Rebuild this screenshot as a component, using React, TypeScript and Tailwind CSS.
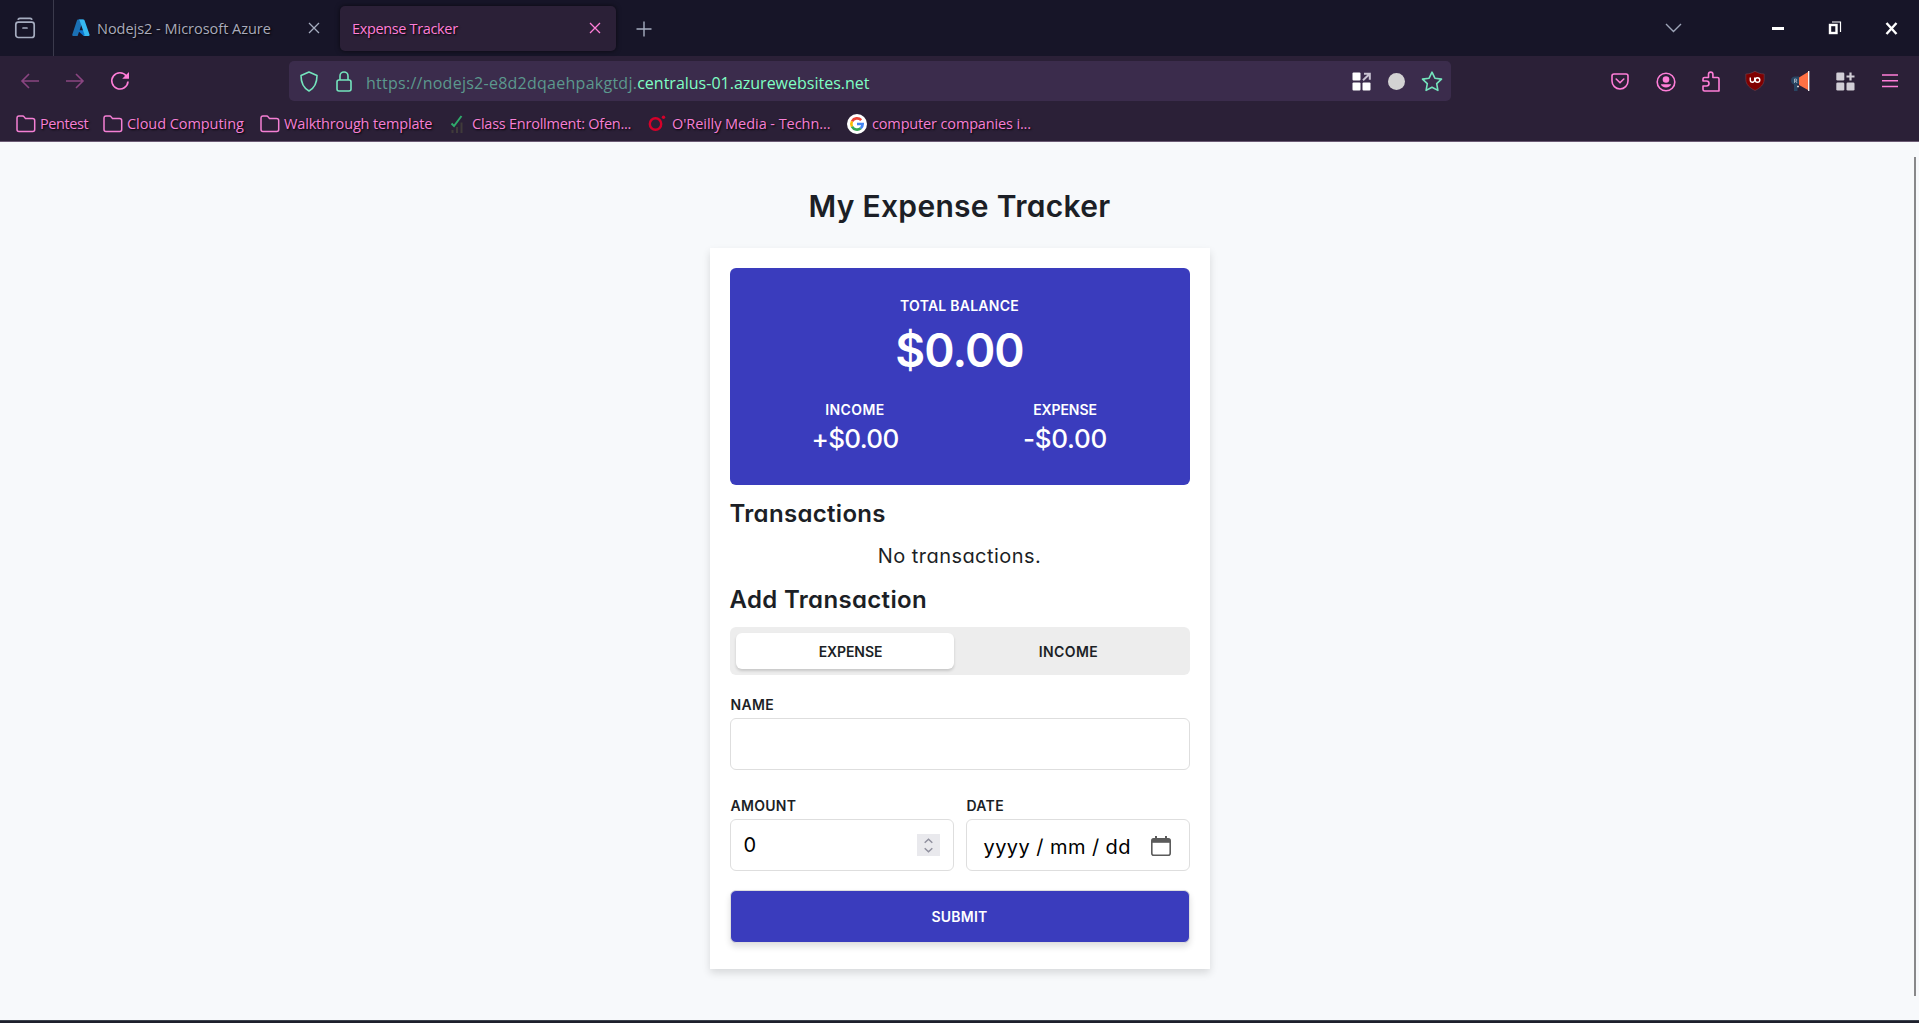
import React from "react";

const ui = "font-['Open_Sans','Noto_Sans',sans-serif]";

function Folder({ label, width, tracking }: { label: string; width: string; tracking: string }) {
  return (
    <div className={`flex items-center gap-1 ${width}`}>
      <svg width="20" height="18" viewBox="0 0 20 18" fill="none" stroke="#f57fd4" strokeWidth="1.5">
        <path d="M1 3.2C1 1.8 1.8 1 3 1h3.6c.8 0 1.2.3 1.6.9L9.500 3.600H16.500c1.500 0 2.200.8 2.200 2V14.500c0 1.300-.8 2-2 2H3c-1.200 0-2-.7-2-2z" />
      </svg>
      <span className={tracking}>{label}</span>
    </div>
  );
}

function Cross({ color }: { color: string }) {
  return (
    <svg className="-mt-px" width="12" height="12" viewBox="0 0 12 12" stroke={color} strokeWidth="1.300" fill="none">
      <path d="M1 1l10 10M11 1L1 11" />
    </svg>
  );
}

function TabStrip() {
  return (
    <div className="flex h-14 items-center bg-[#171528]">
      <div className="flex h-full w-[54px] items-center border-r border-[#3b3a4c] pl-[14px]">
        <svg width="22" height="22" viewBox="0 0 22 22" fill="none" stroke="#a6adc0" strokeWidth="1.700" strokeLinecap="round">
          <path d="M4.200 2.200C4.700 1.600 5 1.400 6 1.400h10c1 0 1.300.2 1.800.8" />
          <rect x="1.800" y="5.200" width="18.400" height="15.300" rx="2.500" />
          <path d="M9 11h4" />
        </svg>
      </div>
      <div className="flex h-full w-[286px] items-center pl-[18px]">
        <svg width="18" height="18" viewBox="0 0 18 18">
          <path d="M6 .5h5.300L5.600 17H1.200C.4 17 0 16.400.3 15.600L5 1.300C5.200.8 5.500.5 6 .5z" fill="#1b70b4" />
          <path d="M14 11.300H5.500l6.200 5.700H16z" fill="#0e76d0" />
          <path d="M6.500.5h5c.5 0 .8.3 1 .8l5 14.300c.3.800-.1 1.400-.9 1.400h-5c.8 0 1.200-.6.900-1.400L7.500 1.300C7.300.8 7 .5 6.500.5z" fill="#36b9f0" />
        </svg>
        <span className="ml-[7px] w-[211px] whitespace-nowrap pt-px text-[14.500px] tracking-[-0.020px] text-[#a9aabb] [text-shadow:1px_1px_2px_#000]">Nodejs2 - Microsoft Azure</span>
        <Cross color="#a6adc0" />
      </div>
      <div className="flex h-[45px] w-[276px] items-center rounded-[5px] bg-[#2b2037] pl-3 shadow-[0_0_5px_rgba(0,0,0,0.6)]">
        <span className="w-[237px] whitespace-nowrap pt-px text-[14.500px] tracking-[-0.350px] text-[#ff7ed8] [text-shadow:1px_1px_2px_#000]">Expense Tracker</span>
        <Cross color="#ff7ed8" />
      </div>
      <svg className="ml-5 mt-px" width="16" height="16" viewBox="0 0 16 16" stroke="#a6adc0" strokeWidth="1.400">
        <path d="M8 .5v15M.5 8h15" />
      </svg>
      <div className="ml-auto flex items-center pr-[21px]">
        <svg width="17" height="10" viewBox="0 0 17 10" stroke="#9ea5b8" strokeWidth="1.400" fill="none">
          <path d="M1 1l7.500 7.500L16 1" />
        </svg>
        <div className="ml-[90px] h-[3px] w-3 bg-white" />
        <svg className="ml-[44px]" width="14" height="14" viewBox="0 0 14 14" fill="none" stroke="#fff">
          <rect x="2" y="4" width="6.500" height="8" strokeWidth="2.400" />
          <path d="M4 1h8.500v10" strokeWidth="1.200" />
        </svg>
        <svg className="ml-[43px]" width="13" height="13" viewBox="0 0 13 13" stroke="#fff" strokeWidth="2.400">
          <path d="M1.500 1l10 11M11.500 1l-10 11" />
        </svg>
      </div>
    </div>
  );
}

function NavBar() {
  return (
    <div className="flex h-[50px] items-center">
      <div className="flex w-[289px] items-center pl-5">
        <svg width="20" height="16" viewBox="0 0 20 16" fill="none" stroke="#8a4581" strokeWidth="1.600">
          <path d="M19 8H2M9 1L2 8l7 7" />
        </svg>
        <svg className="ml-[25px]" width="20" height="16" viewBox="0 0 20 16" fill="none" stroke="#8a4581" strokeWidth="1.600">
          <path d="M1 8h17M11 1l7 7-7 7" />
        </svg>
        <svg className="ml-[25px]" width="20" height="20" viewBox="0 0 20 20" fill="none" stroke="#ff7ed8" strokeWidth="1.700">
          <path d="M16.400 5A8.100 8.100 0 1 0 18 10.500" />
          <path d="M19 1v6.800h-6.800z" fill="#ff7ed8" stroke="none" />
        </svg>
      </div>
      <div className="flex h-10 w-[1162px] items-center rounded-[5px] bg-[#3b2c4c] pl-[11px] pr-2">
        <svg width="18" height="21" viewBox="0 0 18 21" fill="none" stroke="#74e5bd" strokeWidth="1.600">
          <path d="M9 1l8 3.500c0 7-2.500 12.500-8 15.500C3.500 17 1 11.500 1 4.500z" strokeLinejoin="round" />
        </svg>
        <svg className="ml-[18px]" width="16" height="21" viewBox="0 0 16 21" fill="none" stroke="#74e5bd" strokeWidth="1.600">
          <rect x="1" y="9" width="14" height="11" rx="2" />
          <path d="M4 9V5a4 4 0 0 1 8 0v4" />
        </svg>
        <span className="ml-[14px] whitespace-nowrap pt-[3px] text-[16px] tracking-[0.260px] text-[#5c988e]">
          https://nodejs2-e8d2dqaehpakgtdj.<span className="tracking-normal text-[#80ffc4]">centralus-01.azurewebsites.net</span>
        </span>
        <div className="ml-auto flex items-center">
          <svg width="19" height="19" viewBox="0 0 19 19" fill="#fff">
            <rect x=".5" y=".5" width="8" height="8" rx="1" />
            <rect x=".5" y="10.500" width="8" height="8" rx="1" />
            <rect x="10.500" y="10.500" width="8" height="8" rx="1" />
            <path d="M12 1.800h5.800v6M17.300 2.300l-6.300 6" fill="none" stroke="#c9c3d1" strokeWidth="2" />
          </svg>
          <div className="ml-[17px] size-[17px] rounded-full bg-[#d3d3d3]" />
          <svg className="ml-4" width="22" height="21" viewBox="0 0 22 21" fill="none" stroke="#74e5bd" strokeWidth="1.600" strokeLinejoin="round">
            <path d="M11 1.200l2.900 6 6.600.9-4.800 4.600 1.200 6.700L11 16.200l-5.900 3.200 1.200-6.700L1.500 8.100l6.600-.9z" />
          </svg>
        </div>
      </div>
      <div className="ml-auto flex items-center pr-[21px]">
        <svg width="18" height="17" viewBox="0 0 18 17" fill="none" stroke="#ff7ed8" strokeWidth="1.600" strokeLinecap="round">
          <path d="M3 1h12c1.300 0 2 .7 2 2v5a8 8 0 0 1-16 0V3c0-1.300.7-2 2-2z" />
          <path d="M5.200 6L9 9.700 12.800 6" />
        </svg>
        <svg className="ml-[27px] mt-px" width="20" height="20" viewBox="0 0 20 20" fill="#ff7ed8">
          <circle cx="10" cy="10" r="8.800" fill="none" stroke="#ff7ed8" strokeWidth="1.600" />
          <circle cx="10" cy="7.500" r="3.300" />
          <path d="M4.800 12.200h10.400c-.5 1.900-2.600 3.300-5.200 3.300s-4.700-1.400-5.200-3.300z" />
        </svg>
        <svg className="ml-[26px]" width="18" height="21" viewBox="0 0 18 21" fill="none" stroke="#ff7ed8" strokeWidth="1.600" strokeLinejoin="round">
          <path d="M1 10V8C1 7 1.500 6.500 2.500 6.500H6.500V3.300a2.200 2.200 0 0 1 4.400 0V6.500h4.600c1 0 1.500.5 1.500 1.500V20H2.500C1.500 20 1 19.500 1 18.500V15h3.500a2.400 2.400 0 0 0 0-5z" />
        </svg>
        <svg className="ml-[25px]" width="20" height="20" viewBox="0 0 20 20">
          <path d="M10 .3C7 2 4 3 .8 3v5.500c0 5 4 8.500 9.200 11 5.200-2.500 9.200-6 9.200-11V3C16 3 13 2 10 .3z" fill="#800000" stroke="#6d4452" strokeWidth=".6" />
          <path d="M5.300 6.500V9a2.200 2.200 0 0 0 4.400 0V6.500" fill="none" stroke="#fff" strokeWidth="1.400" />
          <circle cx="12.500" cy="9" r="2.300" fill="none" stroke="#fff" strokeWidth="1.400" />
        </svg>
        <svg className="ml-[25px]" width="20" height="20" viewBox="0 0 20 20">
          <path d="M1 9.500c0-3 2-4 4-4h4v7.500H7.500V20H4v-6.500C2 13 1 11.500 1 9.500z" fill="#294563" />
          <path d="M9 6.500l9-5.500v18l-9-5z" fill="#ff7043" />
          <path d="M18.700 0v20" stroke="#fff" strokeWidth="1.300" />
          <path d="M7.200 15.500h1.600" stroke="#fff" strokeWidth="1.600" />
          <path d="M4.500 12V8h1.300a1 1 0 0 1 0 2H4.500m1.300 0L7 12" fill="none" stroke="#cbd5df" strokeWidth=".7" />
        </svg>
        <svg className="ml-[26px]" width="19" height="19" viewBox="0 0 19 19" fill="#d1ced6">
          <rect x=".3" y=".5" width="8" height="8" rx="1.300" />
          <rect x=".3" y="10.500" width="8" height="8" rx="1.300" />
          <rect x="10.500" y="10.500" width="8" height="8" rx="1.300" />
          <path d="M14.500.5v8M10.500 4.500h8" stroke="#d1ced6" strokeWidth="2.200" />
        </svg>
        <svg className="-mt-px ml-[27px]" width="16" height="14" viewBox="0 0 16 14" stroke="#ff7ed8" strokeWidth="1.500">
          <path d="M0 1h16M0 6.700h16M0 12.400h16" />
        </svg>
      </div>
    </div>
  );
}

function Bookmarks() {
  return (
    <div className="flex h-[35px] items-center whitespace-nowrap pl-4 pt-px text-[14.500px] text-[#f57fd4] [text-shadow:1px_1px_2px_#000]">
      <Folder label="Pentest" width="w-[87px]" tracking="tracking-[-0.400px]" />
      <Folder label="Cloud Computing" width="w-[157px]" tracking="tracking-[-0.060px]" />
      <Folder label="Walkthrough template" width="w-[190px]" tracking="tracking-[-0.160px]" />
      <div className="flex w-[198px] items-center">
        <svg width="14" height="19" viewBox="0 0 14 19" fill="none">
          <path d="M1.500 8.500l2.500 2.500L11.500 1" stroke="#2fa96b" strokeWidth="2" />
          <path d="M2.500 18v-3M7 18v-6M11.500 18V7.500" stroke="#403b3a" strokeWidth="2" />
        </svg>
        <span className="ml-2 tracking-[-0.240px]">Class Enrollment: Ofen...</span>
      </div>
      <div className="flex w-[199px] items-center">
        <svg className="-mt-[3px]" width="18" height="16" viewBox="0 0 18 16">
          <ellipse cx="7.500" cy="9" rx="5.700" ry="5.700" fill="none" stroke="#d6002a" strokeWidth="2.400" />
          <circle cx="15.500" cy="2.200" r="1.700" fill="#d6002a" />
        </svg>
        <span className="ml-[6px] tracking-[-0.050px]">O'Reilly Media - Techn...</span>
      </div>
      <div className="flex items-center">
        <svg className="-mt-px" width="20" height="20" viewBox="0 0 20 20">
          <circle cx="10" cy="10" r="10" fill="#fff" />
          <g fill="none" strokeWidth="2.600">
            <path d="M14.200 6.200A5.700 5.700 0 0 0 5 7.300" stroke="#ea4335" />
            <path d="M5 7.300a5.700 5.700 0 0 0 0 5.400" stroke="#fbbc05" />
            <path d="M5 12.700a5.700 5.700 0 0 0 8.700 1.600" stroke="#34a853" />
            <path d="M13.700 14.300A5.700 5.700 0 0 0 15.700 10H10" stroke="#4285f4" />
          </g>
        </svg>
        <span className="ml-[5px] tracking-[-0.150px]">computer companies i...</span>
      </div>
    </div>
  );
}

function Field({ label, children }: { label: string; children?: React.ReactNode }) {
  return (
    <div className="flex flex-1 flex-col">
      <div className="h-[25px] pl-px text-[14px] font-semibold leading-[25px] tracking-[0.300px]">{label}</div>
      <div className="mt-px flex h-[52px] items-center rounded-md border border-[#dedede] bg-white text-black">{children}</div>
    </div>
  );
}

function Summary() {
  return (
    <div className="h-[217px] rounded-md bg-[#3a3cbd] pt-[25px] text-center text-white">
      <div className="text-[14px] font-semibold leading-[25px] tracking-[0.240px]">TOTAL BALANCE</div>
      <div className="text-[46px] font-semibold leading-[64px] tracking-[-0.900px]">$0.00</div>
      <div className="mt-[15px] grid grid-cols-2 px-5">
        <div className="pl-px">
          <div className="text-[14px] font-semibold leading-[25px] tracking-[0.400px]">INCOME</div>
          <div className="text-[26px] font-medium leading-[34px] tracking-[-0.650px]">+$0.00</div>
        </div>
        <div className="pl-px">
          <div className="text-[14px] font-semibold leading-[25px] tracking-[-0.100px]">EXPENSE</div>
          <div className="text-[26px] font-medium leading-[34px] tracking-[-0.300px]">-$0.00</div>
        </div>
      </div>
    </div>
  );
}

function Tracker() {
  return (
    <main className="flex h-[878px] flex-col items-center bg-[#f7f9fb] pt-[40px] font-['Inter',sans-serif] text-[#1c1f26] [font-feature-settings:'cv11']">
      <h1 className="h-[66px] text-[30px] font-semibold leading-[48px] tracking-[0.300px]">My Expense Tracker</h1>
      <div className="h-[721px] w-[500px] bg-white p-5 shadow-[0_4px_8px_rgba(0,0,0,0.13)]">
        <Summary />
        <h2 className="mt-[11px] text-[24px] font-semibold leading-[36px] tracking-[0.320px]">Transactions</h2>
        <p className="mt-[9px] text-center text-[20px] leading-[30px] tracking-[0.450px]">No transactions.</p>
        <h2 className="mt-[11px] text-[24px] font-semibold leading-[36px] tracking-[0.340px]">Add Transaction</h2>
        <div className="mt-[9px] flex h-12 rounded-md bg-[#ededed] p-[6px] text-[14px] font-semibold">
          <div className="flex w-[218px] items-center justify-center rounded-md bg-white pl-3 tracking-[-0.100px] shadow-[0_2px_3px_rgba(0,0,0,0.16)]">EXPENSE</div>
          <div className="flex flex-1 items-center justify-center tracking-[0.400px]">INCOME</div>
        </div>
        <div className="mt-[17px] flex">
          <Field label="NAME" />
        </div>
        <div className="mt-[23px] flex gap-3">
          <Field label="AMOUNT">
            <span className="pl-[13px] text-[20px]">0</span>
            <div className="ml-auto mr-[13px] flex h-[22px] w-[23px] items-center justify-center bg-[#e9e9ed]">
              <svg width="9" height="15" viewBox="0 0 9 15" fill="none" stroke="#8f8f9d" strokeWidth="1.500">
                <path d="M.7 4.700l3.800-3.500 3.800 3.500M.7 10.300l3.800 3.500 3.800-3.500" />
              </svg>
            </div>
          </Field>
          <Field label="DATE">
            <span className="whitespace-pre pl-[17px] pt-[3px] text-[20px] tracking-[0.430px]">yyyy / mm / dd</span>
            <svg className="ml-auto mr-[18px] mt-[2px]" width="20" height="20" viewBox="0 0 20 20" fill="none" stroke="#5b5b5b">
              <rect x=".8" y="2.800" width="18.400" height="16.400" rx="2" strokeWidth="1.600" />
              <path d="M1 4.800h18" strokeWidth="4" />
              <path d="M5 0v4M15 0v4" strokeWidth="2" />
            </svg>
          </Field>
        </div>
        <div className="mt-[19px] flex h-[53px] items-center justify-center rounded-md border border-[#dedede] bg-[#3a3cbd] text-[14px] font-semibold tracking-[0.200px] text-white shadow-[0_4px_6px_rgba(0,0,0,0.12)]">SUBMIT</div>
      </div>
    </main>
  );
}

export default function App() {
  return (
    <div className="relative h-[1023px] w-[1919px] overflow-hidden bg-[#1e202c]">
      <div className={`h-[142px] border-b border-[#6b5b74] bg-[#2b2037] ${ui}`}>
        <TabStrip />
        <NavBar />
        <Bookmarks />
      </div>
      <Tracker />
      <div className="h-px bg-[#3c424c]" />
      <div className="absolute right-[3px] top-[157px] h-[839px] w-[2px] bg-[#88888a]" />
    </div>
  );
}
